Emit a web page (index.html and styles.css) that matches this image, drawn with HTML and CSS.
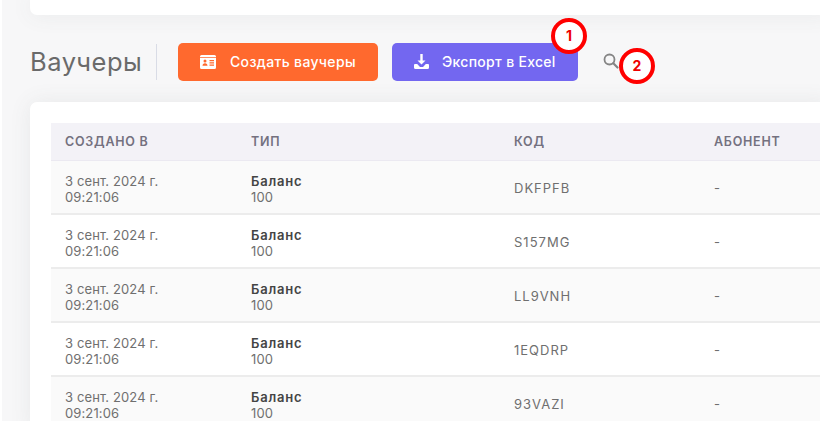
FILE: index.html
```html
<!DOCTYPE html>
<html lang="ru">
<head>
<meta charset="utf-8">
<title>Ваучеры</title>
<link rel="stylesheet" href="styles.css">
</head>
<body>
<main class="page">
  <div class="card card-top"></div>
  <header class="toolbar">
    <h1 class="title">Ваучеры</h1>
    <button class="btn btn-orange">
      <svg class="btn-icon" width="16" height="14" viewBox="0 0 16 14"><path fill="#fff" fill-rule="evenodd" d="M1.5 0h13A1.500 1.500 0 0 1 16 1.500v11a1.500 1.500 0 0 1-1.500 1.500h-13A1.500 1.500 0 0 1 0 12.500v-11A1.500 1.500 0 0 1 1.500 0zM0 2.200v.8h16v-.8zM5 4.500a1.500 1.500 0 1 0 0 3 1.500 1.500 0 0 0 0-3zM2.500 10.800h5c0-1.500-1-2.500-2.500-2.500s-2.500 1-2.500 2.500zM9.500 5v1.200h4.500V5zM9.500 7.300v1.200h4.500V7.300zM9.500 9.600v1.200h4.500V9.600z"/></svg>
      <span>Создать ваучеры</span>
    </button>
    <button class="btn btn-violet">
      <svg class="btn-icon" width="15" height="15" viewBox="0 0 15 15"><path fill="#fff" d="M6.300 0h2.400v6.500h2.800L7.500 10.500 3.500 6.500h2.800zM1 10h2.200l2.800 3h3l2.800-3H14a1 1 0 0 1 1 1v2.500a1.500 1.500 0 0 1-1.500 1.500h-12A1.500 1.500 0 0 1 0 13.500V11a1 1 0 0 1 1-1z"/></svg>
      <span>Экспорт в Excel</span>
    </button>
    <svg class="search" width="16" height="16" viewBox="0 0 16 16"><circle cx="6.500" cy="6.500" r="5" fill="none" stroke="#858585" stroke-width="1.800"/><path d="M10.300 10.300l4.200 4.200" stroke="#858585" stroke-width="2.200" stroke-linecap="round"/></svg>
  </header>
  <section class="card card-table">
    <div class="table">
      <div class="row head">
        <div>СОЗДАНО В</div><div>ТИП</div><div>КОД</div><div>АБОНЕНТ</div>
      </div>
      <div class="row odd">
        <div class="cell-date">3 сент. 2024 г.<br>09:21:06</div>
        <div class="cell-type"><b>Баланс</b><br>100</div>
        <div class="cell-code">DKFPFB</div><div class="cell-code">-</div>
      </div>
      <div class="row">
        <div class="cell-date">3 сент. 2024 г.<br>09:21:06</div>
        <div class="cell-type"><b>Баланс</b><br>100</div>
        <div class="cell-code">S157MG</div><div class="cell-code">-</div>
      </div>
      <div class="row odd">
        <div class="cell-date">3 сент. 2024 г.<br>09:21:06</div>
        <div class="cell-type"><b>Баланс</b><br>100</div>
        <div class="cell-code">LL9VNH</div><div class="cell-code">-</div>
      </div>
      <div class="row">
        <div class="cell-date">3 сент. 2024 г.<br>09:21:06</div>
        <div class="cell-type"><b>Баланс</b><br>100</div>
        <div class="cell-code">1EQDRP</div><div class="cell-code">-</div>
      </div>
      <div class="row odd">
        <div class="cell-date">3 сент. 2024 г.<br>09:21:06</div>
        <div class="cell-type"><b>Баланс</b><br>100</div>
        <div class="cell-code">93VAZI</div><div class="cell-code">-</div>
      </div>
    </div>
  </section>
</main>
<div class="marker marker-1">1</div>
<div class="marker marker-2">2</div>
</body>
</html>
```
FILE: styles.css
```css
* { box-sizing: border-box; }
html, body { margin: 0; height: 100%; overflow: hidden; }
body {
  width: 820px;
  height: 421px;
  position: relative;
  background: #fff;
  font-family: Inter, "Open Sans", sans-serif;
  color: #6f6f6f;
}
.page {
  margin-left: 2px;
  height: 421px;
  padding-left: 28px;
  background: #f7f7f8;
  overflow: hidden;
}
.card {
  background: #fff;
  border-radius: 7px 0 0 7px;
  width: 800px;
  box-shadow: 0 0 22px rgba(80, 85, 90, 0.09);
}
.card-top { height: 15px; border-radius: 0 0 0 7px; }
.toolbar {
  height: 87px;
  display: flex;
  align-items: center;
  padding-top: 6px;
}
.title {
  margin: 0;
  width: 127px;
  height: 36px;
  border-right: 1px solid #d9dce6;
  font-size: 25.5px;
  line-height: 36px;
  font-weight: 400;
  color: #6a6a6a;
  letter-spacing: 0.5px;
}
.btn {
  height: 38px;
  border: 0;
  border-radius: 5px;
  display: flex;
  align-items: center;
  color: #fff;
  font: 500 14px Inter, sans-serif;
  padding: 0;
}
.btn-orange {
  width: 200px;
  margin-left: 21px;
  background: #ff692e;
  padding-left: 22px;
  gap: 14px;
  letter-spacing: 0.35px;
}
.btn-violet {
  width: 186px;
  margin-left: 14px;
  background: #7367f0;
  padding-left: 22px;
  gap: 13px;
  letter-spacing: 0.3px;
}
.btn-icon { flex: none; }
.search { margin-left: 25px; margin-top: -2px; }
.card-table {
  height: 330px;
  padding: 21px 0 0 21px;
  border-radius: 7px 0 0 0;
}
.table { width: 779px; }
.row {
  display: grid;
  grid-template-columns: 186px 263px 200px 130px;
  height: 54px;
  align-items: center;
  border-bottom: 2px solid #ececec;
  font-size: 13px;
}
.row > div { padding-left: 14px; padding-top: 2px; }
.row.odd { background: #fafafa; }
.row.head {
  height: 38px;
  background: #f3f2f7;
  border: 0;
  border-bottom: 1px solid #ebe9f1;
  font-size: 12.500px;
  font-weight: 600;
  letter-spacing: 0.75px;
  color: #74717f;
}
.row.head > div { padding-top: 0; }
.row > .cell-date, .row > .cell-type { line-height: 16px; letter-spacing: 0.12px; padding-top: 4px; }
.cell-type b { font-weight: 600; color: #444; letter-spacing: 0.8px; }
.cell-code { letter-spacing: 1px; }
.marker {
  position: absolute;
  width: 36px;
  height: 36px;
  border: 4px solid #f00;
  border-radius: 50%;
  background: #fff;
  color: #e00;
  font: 700 14px/28px Inter, sans-serif;
  text-align: center;
}
.marker-1 { left: 551px; top: 18px; }
.marker-2 { left: 619px; top: 48px; }
```
